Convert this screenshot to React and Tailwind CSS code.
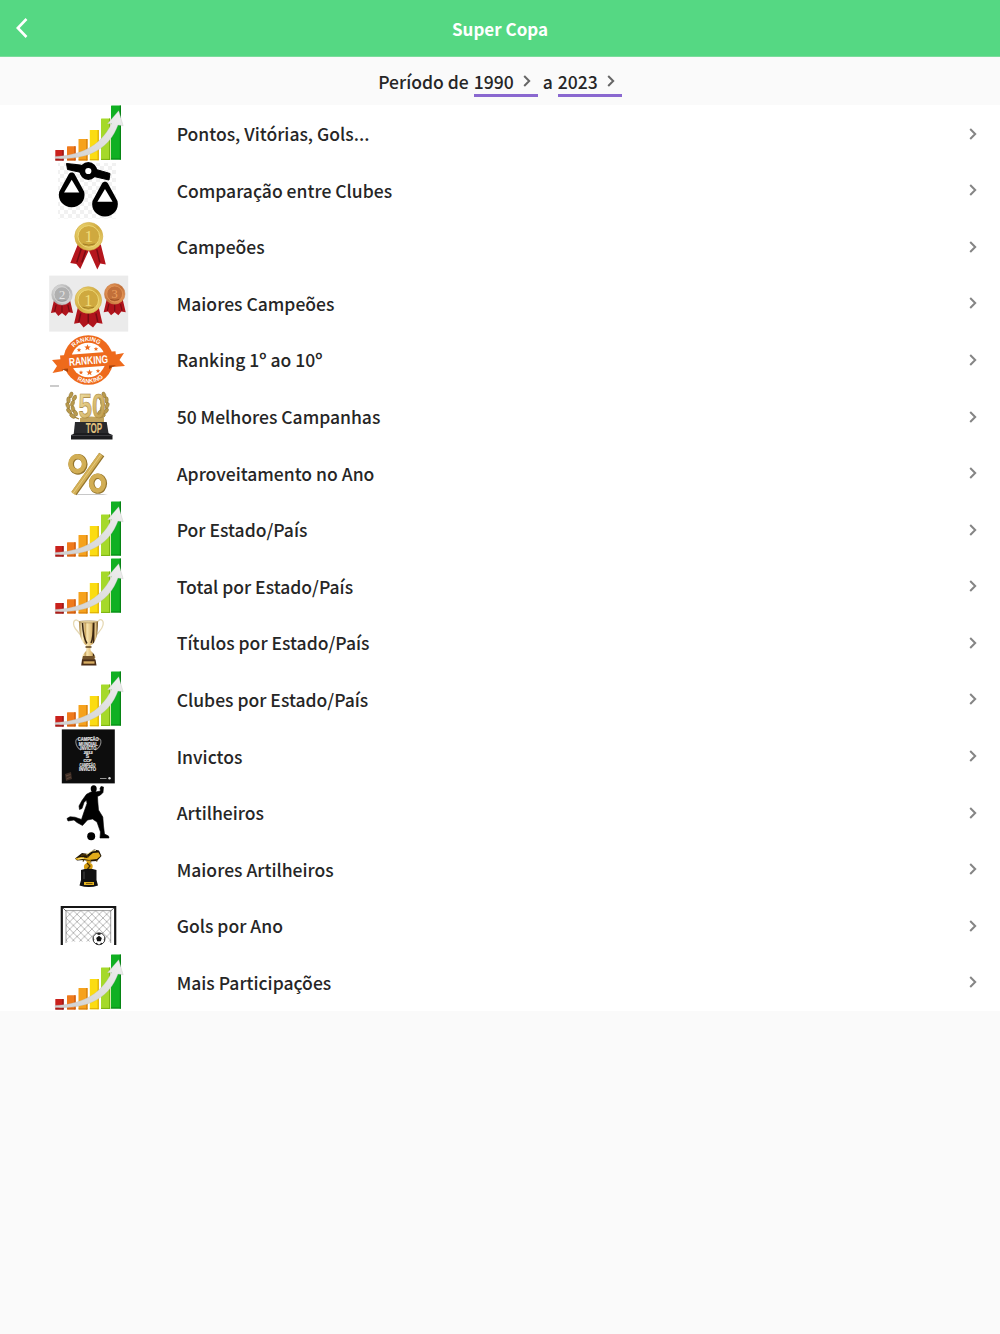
import { useId } from 'react';

const Art = ({ children }) => (
  <svg className="block h-[56.6px] w-20 shrink-0 overflow-visible" viewBox="0 0 80 56.6">
    {children}
  </svg>
);

const BarsIcon = () => {
  const id = useId();
  const bars = [
    [7.3, 45, 8.3, 10.5, '#c9211c', '#8f1512'],
    [19, 41.2, 8.6, 14.2, '#ef7a1c', '#c9560c'],
    [30.5, 34, 9, 21.4, '#f6a21c', '#d57c0a'],
    [41.8, 25, 9, 30.2, '#fbdc12', '#dcae05'],
    [53, 13.5, 9.2, 41.4, '#a5d92a', '#7cb312'],
    [63, 0.5, 10, 54, '#10b022', '#078414'],
  ];
  return (
    <Art>
      <defs>
        <linearGradient id={id} x1="0" y1="1" x2="1" y2="0">
          <stop offset="0" stopColor="#cfcfcf" />
          <stop offset="1" stopColor="#efefef" />
        </linearGradient>
      </defs>
      {bars.map(([x, y, w, h, fill, side]) => (
        <g key={x}>
          <rect x={x} y={y} width={w} height={h} rx="0.6" fill={fill} />
          <rect x={x + w - 1.2} y={y} width="1.2" height={h} fill={side} />
          <rect x={x} y={y + h - 1} width={w} height="1" fill={side} />
        </g>
      ))}
      <path d="M7 51.500C30 50.500 52 43 63.500 18.500L59.500 18.700L70.700 5.700L75.200 20.800L70 20C61 44 41 55 7 53.500Z" fill={`url(#${id})`} stroke="#b9b9b9" strokeWidth="0.3" />
    </Art>
  );
};

const Pan = ({ x, y }) => (
  <g transform={`translate(${x} ${y})`}>
    <path d="M-3 1C-2 -1.200 2 -1.200 3 1L12.500 18.500C14.500 27 8 34 0 34S-14.500 27 -12.500 18.500Z" fill="#000" />
    <path d="M0 6.500L7.600 19.300H-7.600Z" fill="#fff" />
  </g>
);

const ScalesIcon = () => {
  const id = useId();
  return (
    <Art>
      <defs>
        <pattern id={id} width="8" height="8" patternUnits="userSpaceOnUse">
          <rect width="4" height="4" fill="#f1f1f1" />
          <rect x="4" y="4" width="4" height="4" fill="#f1f1f1" />
        </pattern>
      </defs>
      <rect x="10" y="1" width="58" height="55.6" fill={`url(#${id})`} />
      <path d="M18.500 1.500L32 3L50 8L62 11.500L61 18L48 15L31 10L19.500 7.500Z" stroke="#000" strokeWidth="1" strokeLinejoin="round" />
      <circle cx="40.3" cy="9" r="6" fill="#fff" stroke="#000" strokeWidth="5.800" />
      <Pan x={23.7} y={11.2} />
      <Pan x={57} y={20.5} />
    </Art>
  );
};

const MEDAL_COLORS = {
  gold: ['#f1dd7b', '#cfa93f', '#9a7722'],
  silver: ['#e4e4e4', '#b0b0b0', '#8a8a8a'],
  bronze: ['#eda15f', '#c2703a', '#8c431a'],
};

const Medal = ({ x, y, r, tone, label, short }) => {
  const [light, mid, dark] = MEDAL_COLORS[tone];
  const id = useId();
  const s = r / 14;
  return (
    <g transform={`translate(${x} ${y}) scale(${s})`}>
      <linearGradient id={id} x1="0" y1="0" x2="1" y2="1">
        <stop offset="0" stopColor={light} />
        <stop offset="0.5" stopColor={mid} />
        <stop offset="1" stopColor={light} />
      </linearGradient>
      {short ? (
        <>
          <path d="M-11 8L-15 25L-9 24L-5 29L0 25L5 29L9 24L15 25L11 8Z" fill="#b0141c" />
          <path d="M-8 14L-10 23M8 14L10 23M0 14V24" stroke="#780c13" strokeWidth="1.600" />
        </>
      ) : (
        <>
          <path d="M-11 8L-18.500 26.500L-12.500 27.500L-8.500 32.500L0 14L8.500 33L11.500 27L17 28L12 8Z" fill="#b5161d" />
          <path d="M-7.500 12L-12 26M8 13L11 26M-3 14L-7 26" stroke="#780c13" strokeWidth="1.500" />
        </>
      )}
      <circle r="14" fill={`url(#${id})`} stroke={mid} strokeWidth="0.6" />
      <circle r="10.8" fill={mid} stroke={light} strokeWidth="0.9" />
      <path d="M-6 7.500Q0 10 6 7.500" stroke={dark} strokeWidth="0.900" fill="none" />
      <text y="6" textAnchor="middle" fontSize="17" fontFamily="Liberation Serif, serif" fill={light}>{label}</text>
    </g>
  );
};

const MedalIcon = () => (
  <Art>
    <Medal x={40.8} y={18.4} r={14} tone="gold" label="1" />
  </Art>
);

const PodiumIcon = () => (
  <Art>
    <rect x="1.2" y="0.6" width="79" height="56" fill="#ebebeb" />
    <Medal x={14} y={19.7} r={10.3} tone="silver" label="2" short />
    <Medal x={66.7} y={18.9} r={10.3} tone="bronze" label="3" short />
    <Medal x={40.3} y={25} r={13.3} tone="gold" label="1" short />
  </Art>
);

const STARS = [
  [31, 19, 0.7],
  [39.500, 16.500, 1],
  [48, 18, 0.7],
  [33, 41.500, 0.7],
  [41.500, 41.500, 1],
  [50, 40, 0.7],
];

const RankingIcon = () => {
  const id = useId();
  return (
    <Art>
      <defs>
        <path id={`${id}t`} d="M21.300 29A19 19 0 0 1 59.300 29" />
        <path id={`${id}b`} d="M17.300 29A23 23 0 0 0 63.300 29" />
      </defs>
      <circle cx="40.3" cy="29" r="24.8" fill="#ee6a1c" />
      <circle cx="40.3" cy="29" r="17.3" fill="#fff" />
      <g fill="#fff" fontFamily="Liberation Sans, sans-serif" fontWeight="700" fontSize="6">
        <text textAnchor="middle"><textPath href={`#${id}t`} startOffset="46%">RANKING</textPath></text>
        <text textAnchor="middle"><textPath href={`#${id}b`} startOffset="53%">RANKING</textPath></text>
      </g>
      {STARS.map(([x, y, s]) => (
        <path key={x} transform={`translate(${x} ${y}) scale(${s})`} d="M0 -3.200L0.900 -1L3.200 -0.900L1.400 0.600L2 2.800L0 1.500L-2 2.800L-1.400 0.600L-3.200 -0.900L-0.900 -1Z" fill="#ee6a1c" />
      ))}
      <path d="M4 29L15 28V40L4.500 42L9 35ZM65 24L76 22L71.500 29L77 35L65 36Z" fill="#ee6a1c" />
      <path d="M13.500 38L20 36V41Z M61 33.500L68.500 33.800L61 38Z" fill="#a8430b" />
      <path d="M12 24.500L67.500 20.300L69 34L13.500 38Z" fill="#ee6a1c" />
      <text x="40.500" y="33.300" textAnchor="middle" textLength="39" lengthAdjust="spacingAndGlyphs" transform="rotate(-4 40.500 29.500)" fontSize="11" fontWeight="700" fontFamily="Liberation Sans, sans-serif" fill="#fff">RANKING</text>
      <path d="M2 55H11" stroke="#aaa" strokeWidth="1.200" />
    </Art>
  );
};

const Laurel = () => (
  <g>
    <path d="M31 31C20 27 17 15 24 5" fill="none" stroke="#a38336" strokeWidth="1.200" />
    {[[23, 7, 20], [20.5, 12, 0], [19.8, 17.5, -20], [21, 23, -40], [24.5, 28, -55], [26.5, 10, 30], [24.5, 15.500, 20], [25, 21, -10], [27.5, 25, -30]].map(([x, y, a]) => (
      <ellipse key={`${x}-${y}`} cx={x} cy={y} rx="1.800" ry="3.200" transform={`rotate(${a} ${x} ${y})`} fill="#b99a4d" stroke="#806525" strokeWidth="0.400" />
    ))}
  </g>
);

const Top50Icon = () => {
  const id = useId();
  return (
    <Art>
      <linearGradient id={id} x1="0" y1="0" x2="1" y2="1">
        <stop offset="0" stopColor="#f3e4ad" />
        <stop offset="0.600" stopColor="#d5b668" />
        <stop offset="1" stopColor="#b18f42" />
      </linearGradient>
      <Laurel />
      <g transform="translate(79 0) scale(-1 1)"><Laurel /></g>
      <path d="M28.500 3H46V30H30.500Z" fill="#fff" />
      <path d="M32 30Q42 27 56 30V34H32Z" fill="#c2a45d" />
      <text x="44" y="29.500" textAnchor="middle" textLength="27" lengthAdjust="spacingAndGlyphs" fontSize="36" fontFamily="Liberation Sans, sans-serif" fontWeight="700" fill={`url(#${id})`} stroke="#a58339" strokeWidth="0.600">50</text>
      <path d="M27 34H58.700L61 48H25.500Z" fill="#292a2d" />
      <path d="M23 47L28 45H60L64.500 47V51.500H23Z" fill="#1b1c1f" />
      <path d="M23 47.500H64.500" stroke="#55575c" strokeWidth="0.600" />
      <text x="46" y="45.500" textAnchor="middle" textLength="16.500" lengthAdjust="spacingAndGlyphs" fontSize="14" fontWeight="700" fontFamily="Liberation Sans, sans-serif" fill="#e0c17c">TOP</text>
    </Art>
  );
};

const PercentIcon = () => (
  <Art>
    <path d="M28 49H60L55 50H30Z" fill="#c8c8c8" />
    <g fill="none" stroke="#94752d">
      <ellipse cx="30" cy="19.300" rx="6.800" ry="7.600" strokeWidth="5.600" />
      <ellipse cx="50" cy="38.600" rx="6.300" ry="7.400" strokeWidth="5.600" />
      <path d="M53.800 9.500L26 48.500" strokeWidth="6.200" />
    </g>
    <g fill="none" stroke="#d2ae55">
      <ellipse cx="29.300" cy="18.800" rx="6.800" ry="7.400" strokeWidth="4.600" />
      <ellipse cx="49.400" cy="38.200" rx="6.200" ry="7.400" strokeWidth="4.600" />
      <path d="M53 9.500L25.200 48.500" strokeWidth="4.800" />
    </g>
    <path d="M53 9.500L25 48.500" stroke="#e9cf82" strokeWidth="0.900" />
  </Art>
);

const TrophyIcon = () => {
  const id = useId();
  return (
    <Art>
      <linearGradient id={id}>
        <stop offset="0" stopColor="#a98541" />
        <stop offset="0.200" stopColor="#fff4ce" />
        <stop offset="0.330" stopColor="#c7a15a" />
        <stop offset="0.420" stopColor="#f9e5b0" />
        <stop offset="0.700" stopColor="#d8b46c" />
        <stop offset="0.760" stopColor="#3b2410" />
        <stop offset="0.860" stopColor="#e7c98a" />
        <stop offset="1" stopColor="#6b4a1d" />
      </linearGradient>
      <path d="M32 9C28 3 24.500 7 26 12C27.500 17 32 18 34 24M49 9C52 3 56 6 55 11C54 17 49 18 47 24" fill="none" stroke="#e6d9b4" strokeWidth="1.300" />
      <path d="M31 7.500H50C50 20 48.500 29 42.500 31.500V36C43 38 47.500 40 47.500 44H34C34 40 38 38 38.500 36V31.500C33 29 31 20 31 7.500Z" fill={`url(#${id})`} />
      <path d="M34.500 9C35 19 36 25 39 29.500M45.500 9C45.500 18 45 25 43 29" fill="none" stroke="#38240f" strokeWidth="1.500" />
      <ellipse cx="40.500" cy="7.800" rx="9.500" ry="1.100" fill="#ead6a1" stroke="#836330" strokeWidth="0.400" />
      <path d="M37.500 33H43.500" stroke="#5c401c" strokeWidth="1.500" />
      <path d="M35 42H46L47 46H34Z" fill="#73532a" />
      <path d="M34 45.500H47.500L48.500 51.500H33.200Z" fill="#4a2d16" />
      <path d="M35.500 47.300H46.500V49.700H35.500Z" fill="#d8ae63" />
    </Art>
  );
};

const InvictoIcon = () => (
  <Art>
    <rect x="13.800" y="1.400" width="53" height="54" fill="#0d0d0d" />
    <path d="M31 11C26 9 27 19 33 22M49 11C55 9 54 19 47 22" fill="none" stroke="#858585" strokeWidth="1.100" />
    <g fill="#e2e2e2" stroke="#e2e2e2" strokeWidth="0.200" fontFamily="Liberation Sans, sans-serif" fontWeight="700" textAnchor="middle" fontSize="5">
      <text x="40.300" y="13.500" textLength="21" lengthAdjust="spacingAndGlyphs">CAMPEÃO</text>
      <text x="40.300" y="18" textLength="19" lengthAdjust="spacingAndGlyphs">MUNDIAL</text>
      <text x="40.300" y="22.500" textLength="16" lengthAdjust="spacingAndGlyphs">INVICTO</text>
      <text x="40.300" y="25.600" fontSize="3.500" textLength="9" lengthAdjust="spacingAndGlyphs">2012</text>
      <text x="39.500" y="30.500" fontSize="5">S</text>
      <text x="39.500" y="34.300" fontSize="3.800" textLength="8" lengthAdjust="spacingAndGlyphs">CCP</text>
      <text x="39.500" y="38.600" textLength="16" lengthAdjust="spacingAndGlyphs">CAMPEÃO</text>
      <text x="39.500" y="43" textLength="17" lengthAdjust="spacingAndGlyphs">INVICTO</text>
    </g>
    <path d="M17 46L23 44L24 51L18 53Z" fill="#3f2f26" />
    <path d="M18 48L22.500 46.500M18.500 51L23 49" stroke="#75594a" strokeWidth="0.600" />
    <path d="M52 50.500H58.500" stroke="#999" strokeWidth="1" />
    <circle cx="61.500" cy="50.300" r="1.200" fill="#ddd" />
  </Art>
);

const PlayerIcon = () => (
  <Art>
    <ellipse cx="45.700" cy="4.800" rx="3" ry="3.600" fill="#000" />
    <path d="M43 8L48.500 7.800L52.500 7L52 4.500L53 2.500L55.500 3L55 8.500L52.500 11L49.500 12.500L49.800 18L50.500 26L54.800 33L55.500 42L56.500 50L60.500 52L61 54H52L52.500 48L49 38L44.500 35L39.500 36L34.500 41.500L29 38.500L26 36L20 37L19 34.500L22 32.800L27 33.200L33.500 35.500L36 28L39 19.500L38.500 16L36 18.500L34 24.500L31.500 25.500L31 22L34 16.500L38.500 10.300Z" fill="#000" stroke="#000" strokeWidth="0.600" strokeLinejoin="round" />
    <circle cx="43.200" cy="52.300" r="4" fill="#000" />
  </Art>
);

const GoldenBootIcon = () => (
  <Art>
    <path d="M27 17.500L34 12L40 13L46 8.500L51 9.500L53.500 15L49 20L41 20.500L36 19L29 19.500Z" fill="#1d1406" />
    <path d="M27 17.500L33 16L39 17L45 12L50.500 11.500L52.500 15L49 18L41 19L35 18L29 19Z" fill="#e2ad1a" />
    <path d="M38 14L44 10L48 9.500M30 18L36 17" stroke="#fff0a0" strokeWidth="0.900" />
    <path d="M33 14.500L37 13.500L41 16M36 18.500L35 20.500M42 19.500L43 21.500M48 18.500L49 20.500" fill="none" stroke="#4d3608" strokeWidth="1.300" />
    <path d="M38 19.500H43L42 22C46 23 45 27 43 29.500H37C35 25 36 23 39 22Z" fill="#d79e12" />
    <path d="M39 22L42 25L39.500 28" stroke="#4a3205" strokeWidth="1.200" fill="none" />
    <path d="M33 29Q40.500 26.500 48.500 29L48.500 39L50 44.500Q41 47.500 31.500 44.500L33 39Z" fill="#111" />
    <path d="M36 30.500V38" stroke="#555" strokeWidth="0.800" />
    <path d="M36 41H46V44H36Z" fill="#e3b321" />
    <path d="M38 42.500H44.500" stroke="#735008" strokeWidth="0.900" />
  </Art>
);

const GoalIcon = () => {
  const id = useId();
  return (
    <Art>
      <defs>
        <pattern id={id} width="7.400" height="7.400" patternUnits="userSpaceOnUse" x="18" y="13.600">
          <path d="M0 0L7.400 7.400M7.400 0L0 7.400" stroke="#888" strokeWidth="0.600" />
        </pattern>
      </defs>
      <rect x="18" y="13.600" width="44.700" height="31" fill={`url(#${id})`} />
      <path d="M18 46V13.600H62.700V46" fill="none" stroke="#777" strokeWidth="0.700" />
      <path d="M13.800 48V10H67.200V48" fill="none" stroke="#151515" strokeWidth="2.200" />
      <path d="M15 11L18 14M66 11L62.700 14" stroke="#333" strokeWidth="0.700" />
      <circle cx="51" cy="41.800" r="6" fill="#fff" stroke="#111" strokeWidth="0.800" />
      <path d="M51 38.800L53.800 41L52.800 44.300H49.200L48.200 41ZM48 36.800L51 36L54 36.800L51 38ZM45.200 40L46.300 42.500L45.600 44.500ZM56.800 40L55.700 42.500L56.400 44.500ZM47.500 46.800L49 45.500L50 47.700ZM54.500 46.800L53 45.500L52 47.700Z" fill="#111" />
    </Art>
  );
};

const menu = [
  { label: 'Pontos, Vitórias, Gols...', Icon: BarsIcon },
  { label: 'Comparação entre Clubes', Icon: ScalesIcon },
  { label: 'Campeões', Icon: MedalIcon },
  { label: 'Maiores Campeões', Icon: PodiumIcon },
  { label: 'Ranking 1º ao 10º', Icon: RankingIcon },
  { label: '50 Melhores Campanhas', Icon: Top50Icon },
  { label: 'Aproveitamento no Ano', Icon: PercentIcon },
  { label: 'Por Estado/País', Icon: BarsIcon },
  { label: 'Total por Estado/País', Icon: BarsIcon },
  { label: 'Títulos por Estado/País', Icon: TrophyIcon },
  { label: 'Clubes por Estado/País', Icon: BarsIcon },
  { label: 'Invictos', Icon: InvictoIcon },
  { label: 'Artilheiros', Icon: PlayerIcon },
  { label: 'Maiores Artilheiros', Icon: GoldenBootIcon },
  { label: 'Gols por Ano', Icon: GoalIcon },
  { label: 'Mais Participações', Icon: BarsIcon },
];

const Chevron = ({ className }) => (
  <svg className={className} viewBox="0 0 8 12" fill="none" stroke="currentColor" strokeWidth="2">
    <path d="M1.200 1L6.200 6L1.200 11" />
  </svg>
);

const YearSelect = ({ year }) => (
  <button className="flex h-[31px] w-16 items-center justify-between border-b-[3px] border-[#8a68d0] pr-[7px]">
    <span className="pt-1">{year}</span>
    <Chevron className="mt-0.5 h-3 w-2 text-[#666]" />
  </button>
);

function App() {
  return (
    <div className="min-h-[1334px] bg-[#fafafa] font-['Noto_Sans_CJK_SC','Noto_Sans',sans-serif] text-[17.55px] font-medium text-[#262626]">
      <header className="grid h-[57px] grid-cols-[1fr_auto_1fr] items-center border-b border-[#7bdc9c] bg-[#55d883] text-white">
        <button className="pl-[15.5px]" aria-label="Voltar">
          <svg className="h-5 w-3" viewBox="0 0 12 20" fill="none" stroke="currentColor" strokeWidth="2.600">
            <path d="M10.500 1L1.800 10L10.500 19" />
          </svg>
        </button>
        <h1 className="pt-px text-[17px] font-bold">Super Copa</h1>
      </header>

      <div className="flex h-12 items-center justify-center pt-px">
        <span className="mr-[5px] pt-px">Período de</span>
        <YearSelect year="1990" />
        <span className="mx-[5px] pt-px">a</span>
        <YearSelect year="2023" />
      </div>

      <ul className="bg-white">
        {menu.map(({ label, Icon }) => (
          <li key={label} className="flex h-[56.6px] items-center pr-[23px] pl-12">
            <Icon />
            <span className="ml-[48.7px] grow pt-[1.8px]">{label}</span>
            <Chevron className="mt-[0.5px] h-3 w-2 text-[#858585]" />
          </li>
        ))}
      </ul>
    </div>
  );
}

export default App;
